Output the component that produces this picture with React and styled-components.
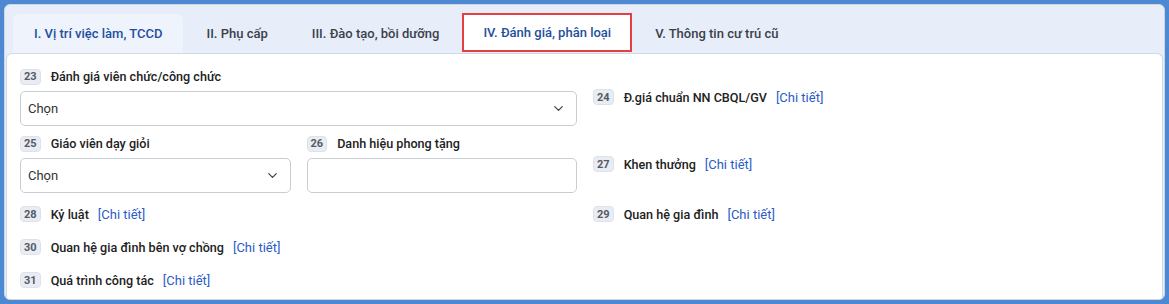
import React from 'react'
import styled, { createGlobalStyle } from 'styled-components'
import { ChevronDown } from 'lucide-react'

const GlobalStyle = createGlobalStyle`
  html, body {
    margin: 0;
    padding: 0;
  }
  body {
    background: #4d89d3;
    font-family: Roboto, "Noto Sans", "Liberation Sans", sans-serif;
    color: #222;
  }
  #root {
    padding: 4px;
  }
`

const tabs = [
  { label: 'I. Vị trí việc làm, TCCD', kind: 'current' },
  { label: 'II. Phụ cấp' },
  { label: 'III. Đào tạo, bồi dưỡng' },
  { label: 'IV. Đánh giá, phân loại', kind: 'marked' },
  { label: 'V. Thông tin cư trú cũ' },
]

function App() {
  return (
    <>
      <GlobalStyle />
      <Frame>
        <TabBar>
          {tabs.map((t) => (
            <Tab key={t.label} $kind={t.kind}>{t.label}</Tab>
          ))}
        </TabBar>

        <Panel>
          <FormGrid>
            <Field>
              <LabelRow>
                <Badge>23</Badge>
                <Label>Đánh giá viên chức/công chức</Label>
              </LabelRow>
              <SelectBox>
                <span>Chọn</span>
                <ChevronDown size={15} strokeWidth={2} color="#444" />
              </SelectBox>
            </Field>
            <Item>
              <Badge>24</Badge>
              <Label>Đ.giá chuẩn NN CBQL/GV</Label>
              <Detail>[Chi tiết]</Detail>
            </Item>

            <Pair>
              <Field>
                <LabelRow>
                  <Badge>25</Badge>
                  <Label>Giáo viên dạy giỏi</Label>
                </LabelRow>
                <SelectBox>
                  <span>Chọn</span>
                  <ChevronDown size={15} strokeWidth={2} color="#444" />
                </SelectBox>
              </Field>
              <Field>
                <LabelRow>
                  <Badge>26</Badge>
                  <Label>Danh hiệu phong tặng</Label>
                </LabelRow>
                <TextInput />
              </Field>
            </Pair>
            <Item>
              <Badge>27</Badge>
              <Label>Khen thưởng</Label>
              <Detail>[Chi tiết]</Detail>
            </Item>

            <Item $short>
              <Badge>28</Badge>
              <Label>Kỷ luật</Label>
              <Detail>[Chi tiết]</Detail>
            </Item>
            <Item $short>
              <Badge>29</Badge>
              <Label>Quan hệ gia đình</Label>
              <Detail>[Chi tiết]</Detail>
            </Item>

            <Item $short>
              <Badge>30</Badge>
              <Label>Quan hệ gia đình bên vợ chồng</Label>
              <Detail>[Chi tiết]</Detail>
            </Item>
            <div />

            <Item $short>
              <Badge>31</Badge>
              <Label>Quá trình công tác</Label>
              <Detail>[Chi tiết]</Detail>
            </Item>
          </FormGrid>
        </Panel>
      </Frame>
    </>
  )
}

export default App

const Frame = styled.div`
  display: flex;
  flex-direction: column;
  height: 296px;
  box-sizing: border-box;
  border: 1px solid #cdd6e6;
  border-radius: 6px;
  background: #e7eef9;
  overflow: hidden;
`

const TabBar = styled.div`
  display: flex;
  gap: 2px;
  padding: 9px 0 0 8px;
`

const Tab = styled.div`
  display: flex;
  align-items: center;
  box-sizing: border-box;
  height: 39px;
  padding: 0 19px;
  font-size: 13px;
  font-weight: 500;
  color: ${(p) => (p.$kind ? '#1e4f9f' : '#3b404a')};
  background: ${(p) =>
    p.$kind === 'current' ? '#eef3fc' : p.$kind === 'marked' ? '#ffffff' : 'transparent'};
  border-radius: ${(p) => (p.$kind === 'current' ? '6px 6px 0 0' : '0')};
  border: ${(p) => (p.$kind === 'marked' ? '2px solid #e3413f' : '2px solid transparent')};
  margin-top: ${(p) => (p.$kind === 'marked' ? '-1px' : '0')};
  white-space: nowrap;
`

const Panel = styled.div`
  flex: 1;
  margin: 0 1px;
  background: #fff;
  border: 1px solid #d3d9e4;
  border-bottom: none;
  border-radius: 6px 6px 0 0;
  padding: 14px 12px 0 13px;
`

const FormGrid = styled.div`
  display: grid;
  grid-template-columns: 1fr 1fr;
  column-gap: 16px;
  row-gap: 9px;
`

const Pair = styled.div`
  display: grid;
  grid-template-columns: 1fr 1fr;
  column-gap: 16px;
`

const Field = styled.div`
  display: flex;
  flex-direction: column;
  gap: 6px;
`

const LabelRow = styled.div`
  display: flex;
  align-items: center;
  height: 17px;
`

const Badge = styled.span`
  display: inline-flex;
  align-items: center;
  justify-content: center;
  box-sizing: border-box;
  min-width: 19px;
  height: 16px;
  padding: 0 3px;
  margin-right: 10px;
  border: 1px solid #dde2ea;
  border-radius: 4px;
  background: #e9edf3;
  color: #555b66;
  font-size: 11px;
  font-weight: 700;
`

const Label = styled.span`
  font-size: 12.6px;
  font-weight: 500;
  color: #222;
  white-space: nowrap;
`

const Detail = styled.a`
  margin-left: 9px;
  font-size: 13px;
  color: #2b5cc6;
  cursor: pointer;
  white-space: nowrap;
`

const Item = styled.div`
  display: flex;
  align-items: center;
  align-self: center;
  height: ${(p) => (p.$short ? '24px' : 'auto')};
`

const SelectBox = styled.div`
  display: flex;
  align-items: center;
  justify-content: space-between;
  box-sizing: border-box;
  height: 35px;
  padding: 0 10px 0 7px;
  border: 1px solid #c8ccd3;
  border-radius: 5px;
  font-size: 13px;
  color: #333;
`

const TextInput = styled.input`
  box-sizing: border-box;
  height: 35px;
  width: 100%;
  border: 1px solid #c8ccd3;
  border-radius: 5px;
  outline: none;
  font-family: inherit;
`
